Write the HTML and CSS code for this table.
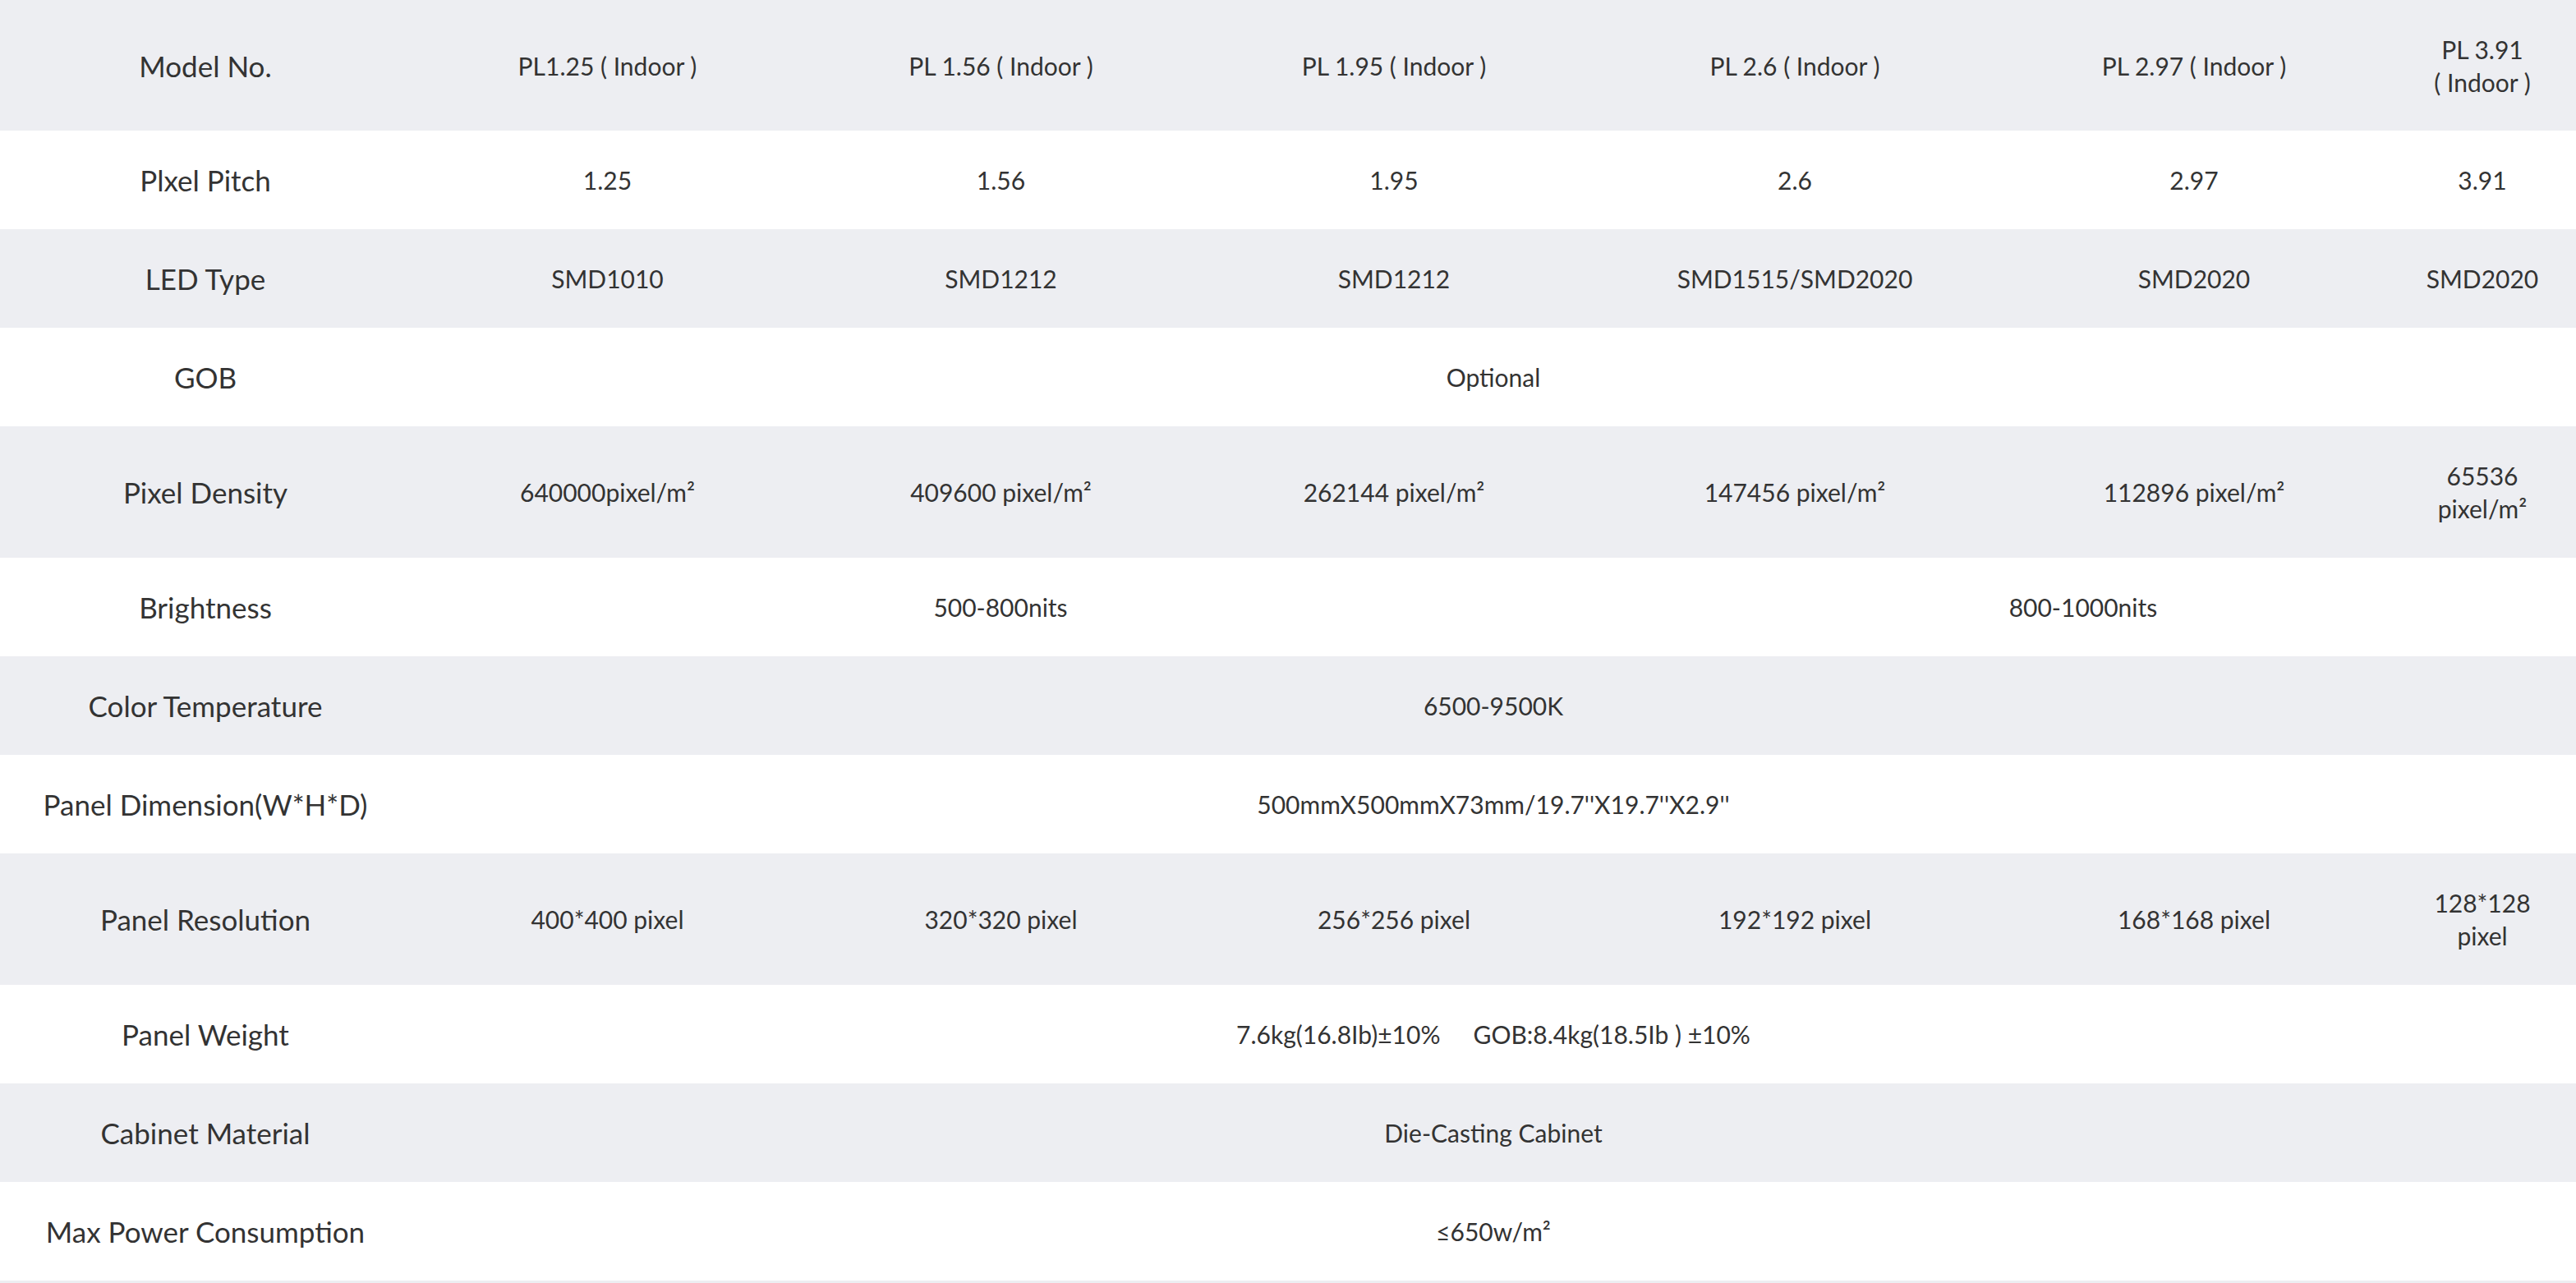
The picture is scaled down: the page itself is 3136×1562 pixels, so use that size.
FILE: index.html
```html
<!DOCTYPE html>
<html lang="en">
<head>
<meta charset="utf-8">
<title>Specifications</title>
<link rel="stylesheet" href="styles.css">
</head>
<body>
<table class="spec">
  <colgroup>
    <col class="c-label">
    <col class="c-1">
    <col class="c-2">
    <col class="c-3">
    <col class="c-4">
    <col class="c-5">
    <col class="c-6">
  </colgroup>
  <tbody>
    <tr class="row alt tall first">
      <th>Model No.</th>
      <td>PL1.25 ( Indoor )</td>
      <td>PL 1.56 ( Indoor )</td>
      <td>PL 1.95 ( Indoor )</td>
      <td>PL 2.6 ( Indoor )</td>
      <td>PL 2.97 ( Indoor )</td>
      <td>PL 3.91<br>( Indoor )</td>
    </tr>
    <tr class="row">
      <th>Plxel Pitch</th>
      <td>1.25</td>
      <td>1.56</td>
      <td>1.95</td>
      <td>2.6</td>
      <td>2.97</td>
      <td>3.91</td>
    </tr>
    <tr class="row alt">
      <th>LED Type</th>
      <td>SMD1010</td>
      <td>SMD1212</td>
      <td>SMD1212</td>
      <td>SMD1515/SMD2020</td>
      <td>SMD2020</td>
      <td>SMD2020</td>
    </tr>
    <tr class="row">
      <th>GOB</th>
      <td colspan="6">Optional</td>
    </tr>
    <tr class="row alt tall">
      <th>Pixel Density</th>
      <td>640000pixel/m²</td>
      <td>409600 pixel/m²</td>
      <td>262144 pixel/m²</td>
      <td>147456 pixel/m²</td>
      <td>112896 pixel/m²</td>
      <td>65536<br>pixel/m²</td>
    </tr>
    <tr class="row">
      <th>Brightness</th>
      <td colspan="3">500-800nits</td>
      <td colspan="3">800-1000nits</td>
    </tr>
    <tr class="row alt">
      <th>Color Temperature</th>
      <td colspan="6">6500-9500K</td>
    </tr>
    <tr class="row">
      <th>Panel Dimension(W*H*D)</th>
      <td colspan="6">500mmX500mmX73mm/19.7''X19.7''X2.9''</td>
    </tr>
    <tr class="row alt tall">
      <th>Panel Resolution</th>
      <td>400*400 pixel</td>
      <td>320*320 pixel</td>
      <td>256*256 pixel</td>
      <td>192*192 pixel</td>
      <td>168*168 pixel</td>
      <td>128*128<br>pixel</td>
    </tr>
    <tr class="row">
      <th>Panel Weight</th>
      <td colspan="6">7.6kg(16.8Ib)±10%<span class="gap"></span>GOB:8.4kg(18.5Ib ) ±10%</td>
    </tr>
    <tr class="row alt">
      <th>Cabinet Material</th>
      <td colspan="6">Die-Casting Cabinet</td>
    </tr>
    <tr class="row">
      <th>Max Power Consumption</th>
      <td colspan="6">≤650w/m²</td>
    </tr>
  </tbody>
</table>
<div class="next-row"></div>
</body>
</html>
```

FILE: styles.css
```css
html, body {
  margin: 0;
  padding: 0;
  background: #ffffff;
}

body {
  font-family: Lato, "Noto Sans", "Liberation Sans", sans-serif;
  color: #333333;
}

.spec {
  width: 3136px;
  border-collapse: collapse;
  border-spacing: 0;
  table-layout: fixed;
}

.c-label { width: 500px; }
.c-1 { width: 479px; }
.c-2 { width: 479px; }
.c-3 { width: 478px; }
.c-4 { width: 498px; }
.c-5 { width: 474px; }
.c-6 { width: 228px; }

.row {
  height: 120px;
  background: #ffffff;
}

.row.alt {
  background: #edeef2;
}

.row.tall {
  height: 160px;
}

.row.first {
  height: 159px;
}

.row th,
.row td {
  padding: 0;
  text-align: center;
  vertical-align: middle;
  line-height: 40px;
}

.row th {
  font-size: 35px;
  font-weight: normal;
}

.row td {
  font-size: 30px;
}

.gap {
  display: inline-block;
  width: 40px;
}

.next-row {
  height: 3px;
  background: #edeef2;
}
```
